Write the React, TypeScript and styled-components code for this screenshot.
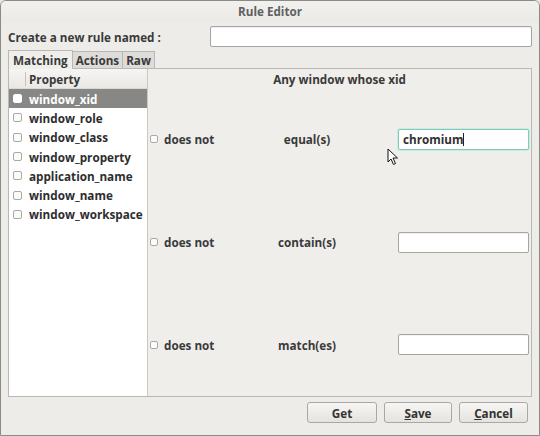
import styled, { createGlobalStyle } from "styled-components";

const GlobalStyle = createGlobalStyle`
  html, body {
    margin: 0;
    padding: 0;
    background: #e9e8e5;
  }
  *, *::before, *::after {
    box-sizing: border-box;
  }
  body {
    font-family: "Open Sans", "DejaVu Sans", sans-serif;
    font-size: 11.7px;
    font-weight: 700;
    color: #3a3a3a;
  }
`;

const Window = styled.div`
  position: relative;
  width: 540px;
  height: 436px;
  display: flex;
  flex-direction: column;
  background: #edece9;
  border: 1px solid #8a8a86;
  border-radius: 6px 6px 0 0;
  overflow: hidden;
`;

const TitleBar = styled.div`
  height: 20px;
  display: flex;
  align-items: center;
  justify-content: center;
  color: #606060;
  background: linear-gradient(#f2f1ee, #ebeae6);
`;

const Body = styled.div`
  display: flex;
  flex-direction: column;
  padding: 5px 7px 0 7px;
`;

const NameRow = styled.div`
  display: flex;
  align-items: center;
  justify-content: space-between;
  height: 21px;
`;

const TextField = styled.div<{ $w: number; $focus?: boolean }>`
  width: ${(p) => p.$w}px;
  height: 21px;
  background: #fff;
  border: 1px solid ${(p) => (p.$focus ? "#7fcab8" : "#a5a5a1")};
  border-radius: 2px;
  box-shadow: ${(p) => (p.$focus ? "0 0 0 1px #c8ebe2" : "inset 0 1px 1px rgba(0,0,0,0.06)")};
  display: flex;
  align-items: center;
  padding-left: 4px;
  color: #2f2f2f;
`;

const Caret = styled.span`
  display: inline-block;
  width: 1px;
  height: 13px;
  background: #222;
`;

const Tabs = styled.div`
  display: flex;
  align-items: flex-end;
  margin-top: 2px;
  height: 19px;
`;

const Tab = styled.div<{ $active?: boolean }>`
  height: ${(p) => (p.$active ? 19 : 17)}px;
  padding: 0 ${(p) => (p.$active ? 4 : 3)}px;
  display: flex;
  align-items: center;
  background: ${(p) => (p.$active ? "#efeeeb" : "#dedcd8")};
  border: 1px solid #b9b8b4;
  border-bottom: none;
  border-left-width: ${(p) => (p.$active ? 1 : 0)}px;
  margin-bottom: ${(p) => (p.$active ? -1 : 0)}px;
  position: relative;
  z-index: ${(p) => (p.$active ? 1 : 0)};
`;

const Notebook = styled.div`
  display: flex;
  height: 329px;
  border: 1px solid #b9b8b4;
  background: #efeeeb;
`;

const List = styled.div`
  width: 139px;
  background: #fff;
  border-right: 1px solid #c9c8c4;
  display: flex;
  flex-direction: column;
`;

const ListHeader = styled.div`
  height: 20px;
  display: flex;
  align-items: center;
  background: linear-gradient(#f6f5f3, #e9e8e5);
  border-bottom: 1px solid #d9d8d4;
`;

const HeaderSep = styled.div`
  width: 17px;
  height: 14px;
  border-right: 1px solid #c4c3bf;
  margin-right: 3px;
`;

const ListRow = styled.div<{ $sel?: boolean }>`
  height: 19.3px;
  display: flex;
  align-items: center;
  padding-left: 4px;
  gap: 7px;
  background: ${(p) => (p.$sel ? "#878785" : "transparent")};
  color: ${(p) => (p.$sel ? "#fff" : "#2e2e2e")};
`;

const Check = styled.span<{ $sel?: boolean; $size?: number }>`
  width: ${(p) => p.$size ?? 9}px;
  height: ${(p) => p.$size ?? 9}px;
  border-radius: 2px;
  border: 1px solid ${(p) => (p.$sel ? "#fff" : "#a9a9a6")};
  background: ${(p) => (p.$sel ? "#fff" : "#fbfbfa")};
  flex-shrink: 0;
`;

const RulePane = styled.div`
  flex: 1;
  display: flex;
  flex-direction: column;
`;

const PaneTitle = styled.div`
  height: 19px;
  display: flex;
  align-items: center;
  justify-content: center;
`;

const RuleRow = styled.div`
  flex: 1;
  display: grid;
  grid-template-columns: 100px 114px 1fr;
  align-items: center;
  padding: 0 2px 0 2px;
`;

const Negate = styled.div`
  display: flex;
  align-items: center;
  gap: 6px;
`;

const Operator = styled.div`
  text-align: center;
`;

const FieldCell = styled.div`
  display: flex;
  justify-content: flex-end;
`;

const ButtonRow = styled.div`
  display: flex;
  justify-content: flex-end;
  gap: 7px;
  padding: 5px 11px 0 0;
`;

const Button = styled.div<{ $w: number }>`
  width: ${(p) => p.$w}px;
  height: 21px;
  display: flex;
  align-items: center;
  justify-content: center;
  border: 1px solid #a9a8a4;
  border-radius: 3px;
  background: linear-gradient(#f7f6f4, #e4e3df);
  color: #333;
  u {
    text-decoration: underline;
  }
`;

const Pointer = styled.svg`
  position: absolute;
  left: 386px;
  top: 147px;
`;

const properties = [
  "window_xid",
  "window_role",
  "window_class",
  "window_property",
  "application_name",
  "window_name",
  "window_workspace",
];

const rules = [
  { op: "equal(s)", value: "chromium" },
  { op: "contain(s)", value: "" },
  { op: "match(es)", value: "" },
];

export default function App() {
  return (
    <Window>
      <GlobalStyle />
      <TitleBar>Rule Editor</TitleBar>
      <Body>
        <NameRow>
          <span>Create a new rule named :</span>
          <TextField $w={322} />
        </NameRow>
        <Tabs>
          <Tab $active>Matching</Tab>
          <Tab>Actions</Tab>
          <Tab>Raw</Tab>
        </Tabs>
        <Notebook>
          <List>
            <ListHeader>
              <HeaderSep />
              Property
            </ListHeader>
            {properties.map((p, i) => (
              <ListRow key={p} $sel={i === 0}>
                <Check $sel={i === 0} />
                {p}
              </ListRow>
            ))}
          </List>
          <RulePane>
            <PaneTitle>Any window whose xid</PaneTitle>
            {rules.map((r) => (
              <RuleRow key={r.op}>
                <Negate>
                  <Check $size={8} />
                  does not
                </Negate>
                <Operator>{r.op}</Operator>
                <FieldCell>
                  <TextField $w={131} $focus={!!r.value}>
                    {r.value}
                    {r.value && <Caret />}
                  </TextField>
                </FieldCell>
              </RuleRow>
            ))}
          </RulePane>
        </Notebook>
      </Body>
      <ButtonRow>
        <Button $w={70}>Get</Button>
        <Button $w={68}>
          <u>S</u>ave
        </Button>
        <Button $w={69}>
          <u>C</u>ancel
        </Button>
      </ButtonRow>
      <Pointer width="12" height="18" viewBox="0 0 12 18">
        <path
          d="M1 1 L1 14 L4 11 L6.5 16.5 L8.5 15.5 L6 10 L10.5 10 Z"
          fill="#fff"
          stroke="#111"
          strokeWidth="1"
          strokeLinejoin="round"
        />
      </Pointer>
    </Window>
  );
}
